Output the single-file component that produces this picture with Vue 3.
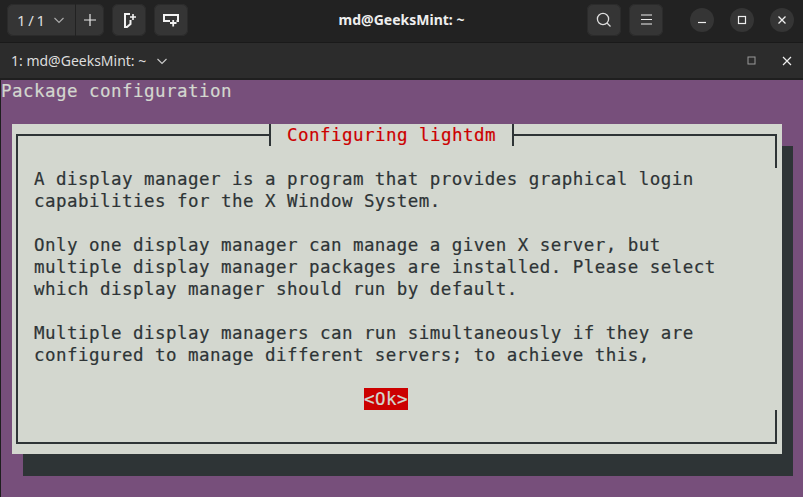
<script setup>
const paragraphs = [
  ['A display manager is a program that provides graphical login', 'capabilities for the X Window System.'],
  ['Only one display manager can manage a given X server, but', 'multiple display manager packages are installed. Please select', 'which display manager should run by default.'],
  ['Multiple display managers can run simultaneously if they are', 'configured to manage different servers; to achieve this,'],
]
</script>

<template>
  <div class="window">
    <header class="titlebar">
      <div class="bar-left">
        <div class="btn-group">
          <div class="counter">
            <span class="count">1 / 1</span>
            <svg width="12" height="12" viewBox="0 0 12 12"><path d="M1.5 4l4.5 4.5L10.5 4" fill="none" stroke="#aaa" stroke-width="1.2"/></svg>
          </div>
          <div class="plus">
            <svg width="14" height="14" viewBox="0 0 14 14"><path d="M7 1v12M1 7h12" stroke="#e8e8e8" stroke-width="1.2"/></svg>
          </div>
        </div>
        <div class="btn">
          <svg width="16" height="16" viewBox="0 0 16 16"><path d="M9 2H4v13h2l3.5-3V8" fill="none" stroke="#f2f2f2" stroke-width="2"/><path d="M9 5h6M12 2v6" stroke="#f2f2f2" stroke-width="1.6"/></svg>
        </div>
        <div class="btn">
          <svg width="16" height="16" viewBox="0 0 16 16"><path d="M7 9H1V3h14v6h-1.5" fill="none" stroke="#f2f2f2" stroke-width="2"/><path d="M7 11h6.5M10.2 8v6.5" stroke="#f2f2f2" stroke-width="1.8"/></svg>
        </div>
      </div>
      <div class="title">md@GeeksMint: ~</div>
      <div class="bar-right">
        <div class="btn">
          <svg width="16" height="16" viewBox="0 0 16 16"><circle cx="7" cy="7" r="5.6" fill="none" stroke="#ddd" stroke-width="1.3"/><path d="M11 11l3.5 3.5" stroke="#ddd" stroke-width="1.3"/></svg>
        </div>
        <div class="btn">
          <svg width="16" height="16" viewBox="0 0 16 16"><path d="M3 3h11M3 7.5h11M3 12h11" stroke="#eee" stroke-width="1.1"/></svg>
        </div>
        <div class="win-controls">
          <div class="circle"><svg width="10" height="10" viewBox="0 0 10 10"><path d="M1 7.5h8" stroke="#eee" stroke-width="1.2"/></svg></div>
          <div class="circle"><svg width="10" height="10" viewBox="0 0 10 10"><rect x="1.5" y="1.5" width="7" height="7" fill="none" stroke="#eee" stroke-width="1.2"/></svg></div>
          <div class="circle"><svg width="10" height="10" viewBox="0 0 10 10"><path d="M1.5 1.5l7 7M8.5 1.5l-7 7" stroke="#eee" stroke-width="1.3"/></svg></div>
        </div>
      </div>
    </header>
    <div class="tabbar">
      <div class="tab-label">
        <span>1: md@GeeksMint: ~</span>
        <svg width="12" height="12" viewBox="0 0 12 12"><path d="M1.5 4l4.5 4.5L10.5 4" fill="none" stroke="#ccc" stroke-width="1.1"/></svg>
      </div>
      <div class="tab-actions">
        <svg width="9" height="9" viewBox="0 0 9 9"><rect x="1" y="1" width="7" height="7" fill="none" stroke="#999" stroke-width="1"/></svg>
        <svg width="10" height="10" viewBox="0 0 10 10"><path d="M1 1l8 8M9 1l-8 8" stroke="#eee" stroke-width="1.2"/></svg>
      </div>
    </div>
    <main class="terminal">
      <div class="backtitle">Package configuration</div>
      <section class="dialog">
        <div class="frame-top">
          <span class="rule"></span>
          <span class="caption">Configuring lightdm</span>
          <span class="rule rule-right"></span>
        </div>
        <div class="frame-body">
          <div class="message">
            <p v-for="(lines, i) in paragraphs" :key="i">
              <span v-for="line in lines" :key="line" class="line">{{ line }}</span>
            </p>
          </div>
          <div class="actions"><span class="ok">&lt;Ok&gt;</span></div>
        </div>
      </section>
    </main>
  </div>
</template>

<style>
html, body { margin: 0; background: #222; overflow: hidden; }
</style>

<style scoped>
.window {
  width: 803px;
  height: 497px;
  display: flex;
  flex-direction: column;
  background: #1f1f1f;
  overflow: hidden;
  font-family: "Noto Sans", sans-serif;
  color: #eee;
}
.titlebar {
  height: 43px;
  box-sizing: border-box;
  padding: 4px 0 0;
  display: grid;
  grid-template-columns: 1fr auto 1fr;
  align-items: start;
  background: #222;
  border-bottom: 1px solid #1a1a1a;
  flex: none;
}
.bar-left, .bar-right { display: flex; gap: 8px; }
.bar-left { padding-left: 7px; }
.bar-right { justify-content: flex-end; }
.btn-group {
  width: 97px;
  height: 32px;
  box-sizing: border-box;
  display: flex;
  background: #353535;
  border-radius: 6px;
  box-shadow: inset 0 0 0 1px #2b2b2b;
}
.counter {
  width: 69px;
  display: flex;
  align-items: center;
  gap: 8px;
  padding-left: 10px;
  box-sizing: border-box;
  border-right: 1px solid #222;
}
.count { font-size: 15px; letter-spacing: -0.6px; color: #ddd; }
.plus { flex: 1; display: flex; align-items: center; justify-content: center; }
.btn {
  width: 34px;
  height: 32px;
  background: #353535;
  border-radius: 6px;
  box-shadow: inset 0 0 0 1px #2b2b2b;
  display: flex;
  align-items: center;
  justify-content: center;
}
.title { font-weight: 700; font-size: 14px; line-height: 32px; color: #eee; white-space: nowrap; }
.win-controls { display: flex; gap: 16px; margin: 4px 9px 0 19px; }
.circle {
  width: 24px;
  height: 24px;
  border-radius: 50%;
  background: #353535;
  display: flex;
  align-items: center;
  justify-content: center;
}
.tabbar {
  height: 35px;
  flex: none;
  box-sizing: border-box;
  display: flex;
  align-items: center;
  justify-content: space-between;
  padding: 0 11px 0 11px;
  background: #2c2c2c;
}
.tab-label { display: flex; align-items: center; gap: 10px; font-size: 14px; color: #ddd; }
.tab-actions { display: flex; align-items: center; gap: 26px; }
.terminal {
  flex: 1;
  margin: 2px 0 0 1px;
  background: #774f7b;
  font-family: "DejaVu Sans Mono", monospace;
  font-size: 17.5px;
  letter-spacing: 0.46px;
  line-height: 22px;
  color: #2e3436;
  -webkit-text-stroke: 0.2px currentColor;
}
.backtitle { height: 22px; color: #d3d7cf; white-space: pre; }
.dialog {
  width: 770px;
  height: 330px;
  margin: 22px 0 0 11px;
  background: #d3d7cf;
  box-shadow: 11px 22px 0 #2e3436;
  display: flex;
  flex-direction: column;
}
.frame-top { height: 22px; display: flex; flex: none; padding: 0 5px 0 4px; }
.rule {
  width: 255px;
  height: 12px;
  flex: none;
  box-sizing: border-box;
  margin-top: 10px;
  border-top: 2px solid #2e3436;
  border-left: 2px solid #2e3436;
}
.rule-right {
  width: 263px;
  border-left: 0;
  border-right: 2px solid #2e3436;
  position: relative;
}
.rule-right::after {
  content: "";
  position: absolute;
  right: -2px;
  top: 10px;
  width: 2px;
  height: 22px;
  background: #2e3436;
}
.caption {
  width: 245px;
  box-sizing: border-box;
  height: 22px;
  flex: none;
  border-left: 2px solid #2e3436;
  border-right: 2px solid #2e3436;
  margin-left: -2px;
  padding-left: 16px;
  color: #cc0000;
  white-space: pre;
}
.frame-body {
  flex: 1;
  margin: 0 5px 10px 4px;
  box-sizing: border-box;
  padding: 22px 0 0 16px;
  border-left: 2px solid #2e3436;
  border-bottom: 2px solid #2e3436;
  position: relative;
}
.frame-body::after {
  content: "";
  position: absolute;
  right: 0;
  bottom: -2px;
  width: 2px;
  height: 34px;
  background: #2e3436;
}
.message p { margin: 0 0 22px; }
.line { display: block; white-space: pre; }
.actions { margin: 22px 0 0 330px; }
.ok {
  display: inline-block;
  width: 44px;
  height: 22px;
  background: #cc0000;
  color: #d3d7cf;
  white-space: pre;
}
</style>
